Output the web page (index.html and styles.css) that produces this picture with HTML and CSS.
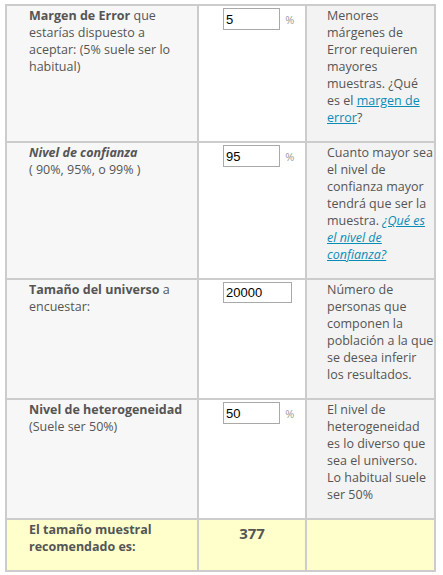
FILE: index.html
```html
<!DOCTYPE html>
<html lang="es">
<head>
    <meta charset="UTF-8">
    <title>Calculadora de muestras</title>
    <link rel="stylesheet" href="styles.css">
</head>
<body>
    <table class="calc">
        <colgroup>
            <col class="col-label">
            <col class="col-input">
            <col class="col-help">
        </colgroup>
        <tr>
            <td class="label"><b>Margen de Error</b> que estarías dispuesto a aceptar: (5% suele ser lo habitual)</td>
            <td class="field"><input type="text" class="num" value="5"> <span class="pct">%</span></td>
            <td class="help">Menores márgenes de Error requieren mayores muestras. ¿Qué es el <a href="#">margen de error</a>?</td>
        </tr>
        <tr>
            <td class="label"><b><i>Nivel de confianza</i></b><br>( 90%, 95%, o 99% )</td>
            <td class="field"><input type="text" class="num" value="95"> <span class="pct">%</span></td>
            <td class="help">Cuanto mayor sea el nivel de confianza mayor tendrá que ser la muestra. <a href="#"><i>¿Qué es el nivel de confianza?</i></a></td>
        </tr>
        <tr>
            <td class="label"><b>Tamaño del universo</b> a encuestar:</td>
            <td class="field"><input type="text" class="num wide" value="20000"></td>
            <td class="help">Número de personas que componen la población a la que se desea inferir los resultados.</td>
        </tr>
        <tr>
            <td class="label"><b>Nivel de heterogeneidad</b><br>(Suele ser 50%)</td>
            <td class="field"><input type="text" class="num" value="50"> <span class="pct">%</span></td>
            <td class="help">El nivel de heterogeneidad es lo diverso que sea el universo. Lo habitual suele ser 50%</td>
        </tr>
        <tr class="result">
            <td class="label"><b>El tamaño muestral recomendado es:</b></td>
            <td class="field total">377</td>
            <td class="help"></td>
        </tr>
    </table>
</body>
</html>
```

FILE: styles.css
```css
/* General styles */
body {
    margin: 4px 0 0 5px;
    font-family: "Open Sans", "Noto Sans", sans-serif;
    font-size: 12.5px;
    line-height: 17px;
    color: #555;
    background-color: #fff;
}

/* Calculator table */
.calc {
    width: 429px;
    border-collapse: collapse;
    table-layout: fixed;
}

.col-label {
    width: 192px;
}

.col-input {
    width: 108px;
}

.col-help {
    width: 129px;
}

.calc td {
    border: 2px solid #ccc;
    vertical-align: top;
    padding: 1px 0 15px;
}

.calc td.label {
    background-color: #f7f7f7;
    padding-left: 22px;
    padding-right: 4px;
}

.calc td.field {
    background-color: #fff;
    padding-left: 24px;
    padding-top: 2px;
}

.calc td.help {
    background-color: #f3f3f3;
    padding-left: 20px;
}

.calc a {
    color: #0a8db5;
}

/* Inputs */
.num {
    width: 57px;
    height: 22px;
    box-sizing: border-box;
    border: 1px solid #a9a9a9;
    padding: 1px 2px;
    font-family: "Liberation Sans", Arial, sans-serif;
    font-size: 13px;
    color: #000;
    margin: 0;
}

.num.wide {
    width: 69px;
    height: 21px;
}

.pct {
    margin-left: 2px;
    font-size: 11px;
    color: #999;
}

/* Result row */
.result td.label,
.result td.field,
.result td.help {
    background-color: #ffffcc;
}

.result td.field.total {
    padding: 2px 0 0;
    text-align: center;
    font-size: 15px;
    font-weight: bold;
    line-height: 22px;
}
```
